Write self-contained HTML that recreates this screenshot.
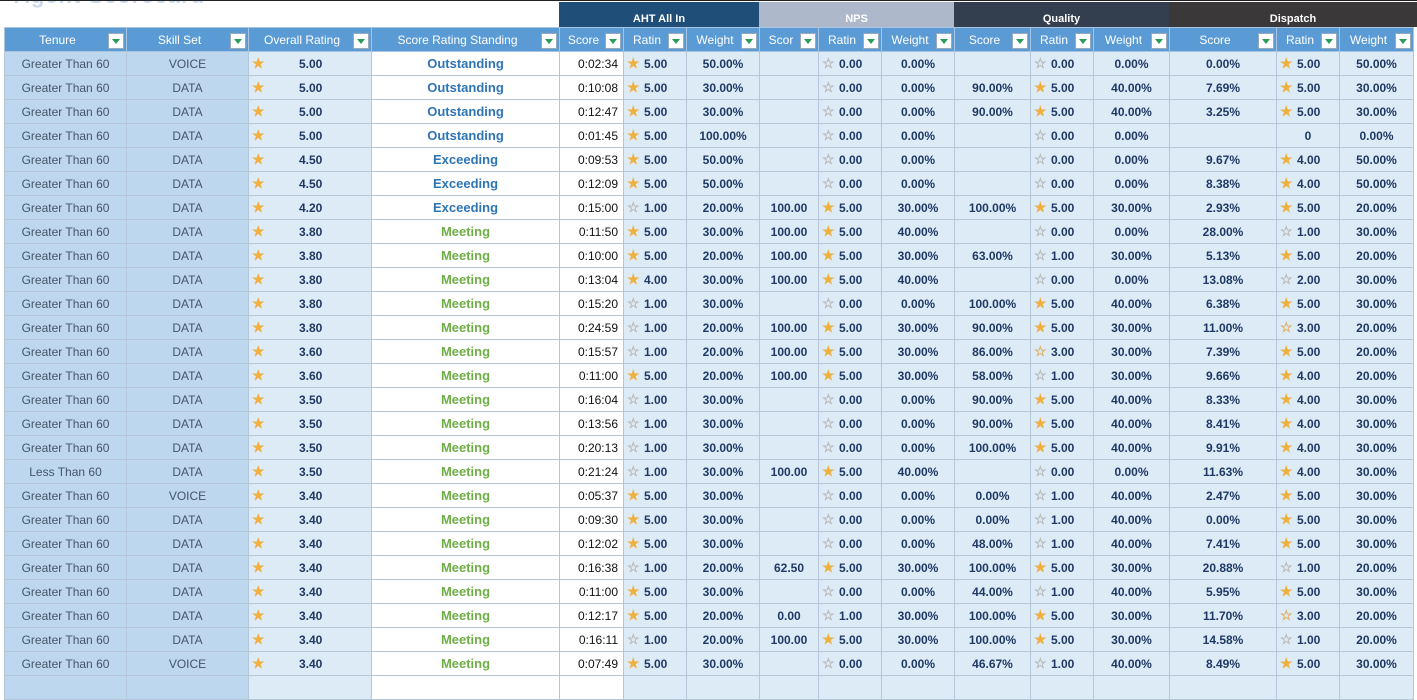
<!DOCTYPE html>
<html><head><meta charset="utf-8"><style>
body{margin:0;width:1417px;height:682px;overflow:hidden;background:#fff;font-family:"Liberation Sans",Arial,sans-serif;position:relative}
.title{position:absolute;left:14px;top:-17px;font-size:22px;color:#c9d9ec;font-weight:bold;letter-spacing:1px}
.topline{position:absolute;left:0;top:0;width:1417px;height:1px;background:#222}
.grp{position:absolute;top:2px;height:25px;color:#fff;font-size:11px;font-weight:bold;text-align:center;line-height:34px;box-sizing:border-box}
table{position:absolute;left:4px;top:27px;border-collapse:collapse;table-layout:fixed}
td{height:23px;border:1px solid #b4c6d8;padding:0;font-size:12px;color:#1f3864;text-align:center;white-space:nowrap;overflow:hidden;position:relative;background:#ddebf7;font-weight:bold}
tr.h td{background:#5b9bd5;color:#fff;font-weight:normal;font-size:12px;border-color:#a9c4e0;text-align:center;padding-right:16px}
tr.h td b{position:absolute;right:2px;top:5px;width:14px;height:14px;background:#fff;border:1px solid #9ab}
tr.h td b:after{content:"";position:absolute;left:3px;top:5px;border-left:4px solid transparent;border-right:4px solid transparent;border-top:5px solid #2a9d5a}
td.t{background:#bdd7ee;color:#44546a;font-weight:normal}
td.s{background:#bdd7ee;color:#44546a;font-weight:normal}
td.w{background:#fff;font-size:13px}
td.a{background:#fff;color:#111;font-weight:normal;text-align:right;padding-right:5px}
.o{color:#2e75b6}.m{color:#70ad47}
td.r{text-align:left;padding-left:20px}
td.r i{position:absolute;left:3px;top:2px;font-style:normal;font-size:14px;line-height:18px}
.g{color:#f0b040}.e{color:#b8b8b8}.hf{color:#e0b060}
td.ov{text-align:left;padding-left:50px}
</style></head><body>
<div class="title">Agent Scorecard</div>
<div class="topline"></div>
<div class="grp" style="left:559px;width:200px;background:#1f4e79">AHT All In</div>
<div class="grp" style="left:759px;width:195px;background:#adb9ca">NPS</div>
<div class="grp" style="left:954px;width:215px;background:#333f4f">Quality</div>
<div class="grp" style="left:1169px;width:248px;background:#3a3838">Dispatch</div>
<table>
<colgroup><col style="width:122px"><col style="width:122px"><col style="width:123px"><col style="width:188px"><col style="width:64px"><col style="width:63px"><col style="width:73px"><col style="width:59px"><col style="width:63px"><col style="width:73px"><col style="width:76px"><col style="width:63px"><col style="width:76px"><col style="width:107px"><col style="width:63px"><col style="width:74px"></colgroup>
<tr class="h"><td>Tenure<b></b></td><td>Skill Set<b></b></td><td>Overall Rating<b></b></td><td>Score Rating Standing<b></b></td><td>Score<b></b></td><td>Ratin<b></b></td><td>Weight<b></b></td><td>Scor<b></b></td><td>Ratin<b></b></td><td>Weight<b></b></td><td>Score<b></b></td><td>Ratin<b></b></td><td>Weight<b></b></td><td>Score<b></b></td><td>Ratin<b></b></td><td>Weight<b></b></td></tr>
<tr><td class="t">Greater Than 60</td><td class="s">VOICE</td><td class="r ov"><i class="g">★</i>5.00</td><td class="w o">Outstanding</td><td class="a">0:02:34</td><td class="r"><i class="g">★</i>5.00</td><td>50.00%</td><td></td><td class="r"><i class="e">☆</i>0.00</td><td>0.00%</td><td></td><td class="r"><i class="e">☆</i>0.00</td><td>0.00%</td><td>0.00%</td><td class="r"><i class="g">★</i>5.00</td><td>50.00%</td></tr>
<tr><td class="t">Greater Than 60</td><td class="s">DATA</td><td class="r ov"><i class="g">★</i>5.00</td><td class="w o">Outstanding</td><td class="a">0:10:08</td><td class="r"><i class="g">★</i>5.00</td><td>30.00%</td><td></td><td class="r"><i class="e">☆</i>0.00</td><td>0.00%</td><td>90.00%</td><td class="r"><i class="g">★</i>5.00</td><td>40.00%</td><td>7.69%</td><td class="r"><i class="g">★</i>5.00</td><td>30.00%</td></tr>
<tr><td class="t">Greater Than 60</td><td class="s">DATA</td><td class="r ov"><i class="g">★</i>5.00</td><td class="w o">Outstanding</td><td class="a">0:12:47</td><td class="r"><i class="g">★</i>5.00</td><td>30.00%</td><td></td><td class="r"><i class="e">☆</i>0.00</td><td>0.00%</td><td>90.00%</td><td class="r"><i class="g">★</i>5.00</td><td>40.00%</td><td>3.25%</td><td class="r"><i class="g">★</i>5.00</td><td>30.00%</td></tr>
<tr><td class="t">Greater Than 60</td><td class="s">DATA</td><td class="r ov"><i class="g">★</i>5.00</td><td class="w o">Outstanding</td><td class="a">0:01:45</td><td class="r"><i class="g">★</i>5.00</td><td>100.00%</td><td></td><td class="r"><i class="e">☆</i>0.00</td><td>0.00%</td><td></td><td class="r"><i class="e">☆</i>0.00</td><td>0.00%</td><td></td><td>0</td><td>0.00%</td></tr>
<tr><td class="t">Greater Than 60</td><td class="s">DATA</td><td class="r ov"><i class="g">★</i>4.50</td><td class="w o">Exceeding</td><td class="a">0:09:53</td><td class="r"><i class="g">★</i>5.00</td><td>50.00%</td><td></td><td class="r"><i class="e">☆</i>0.00</td><td>0.00%</td><td></td><td class="r"><i class="e">☆</i>0.00</td><td>0.00%</td><td>9.67%</td><td class="r"><i class="g">★</i>4.00</td><td>50.00%</td></tr>
<tr><td class="t">Greater Than 60</td><td class="s">DATA</td><td class="r ov"><i class="g">★</i>4.50</td><td class="w o">Exceeding</td><td class="a">0:12:09</td><td class="r"><i class="g">★</i>5.00</td><td>50.00%</td><td></td><td class="r"><i class="e">☆</i>0.00</td><td>0.00%</td><td></td><td class="r"><i class="e">☆</i>0.00</td><td>0.00%</td><td>8.38%</td><td class="r"><i class="g">★</i>4.00</td><td>50.00%</td></tr>
<tr><td class="t">Greater Than 60</td><td class="s">DATA</td><td class="r ov"><i class="g">★</i>4.20</td><td class="w o">Exceeding</td><td class="a">0:15:00</td><td class="r"><i class="e">☆</i>1.00</td><td>20.00%</td><td>100.00</td><td class="r"><i class="g">★</i>5.00</td><td>30.00%</td><td>100.00%</td><td class="r"><i class="g">★</i>5.00</td><td>30.00%</td><td>2.93%</td><td class="r"><i class="g">★</i>5.00</td><td>20.00%</td></tr>
<tr><td class="t">Greater Than 60</td><td class="s">DATA</td><td class="r ov"><i class="g">★</i>3.80</td><td class="w m">Meeting</td><td class="a">0:11:50</td><td class="r"><i class="g">★</i>5.00</td><td>30.00%</td><td>100.00</td><td class="r"><i class="g">★</i>5.00</td><td>40.00%</td><td></td><td class="r"><i class="e">☆</i>0.00</td><td>0.00%</td><td>28.00%</td><td class="r"><i class="e">☆</i>1.00</td><td>30.00%</td></tr>
<tr><td class="t">Greater Than 60</td><td class="s">DATA</td><td class="r ov"><i class="g">★</i>3.80</td><td class="w m">Meeting</td><td class="a">0:10:00</td><td class="r"><i class="g">★</i>5.00</td><td>20.00%</td><td>100.00</td><td class="r"><i class="g">★</i>5.00</td><td>30.00%</td><td>63.00%</td><td class="r"><i class="e">☆</i>1.00</td><td>30.00%</td><td>5.13%</td><td class="r"><i class="g">★</i>5.00</td><td>20.00%</td></tr>
<tr><td class="t">Greater Than 60</td><td class="s">DATA</td><td class="r ov"><i class="g">★</i>3.80</td><td class="w m">Meeting</td><td class="a">0:13:04</td><td class="r"><i class="g">★</i>4.00</td><td>30.00%</td><td>100.00</td><td class="r"><i class="g">★</i>5.00</td><td>40.00%</td><td></td><td class="r"><i class="e">☆</i>0.00</td><td>0.00%</td><td>13.08%</td><td class="r"><i class="e">☆</i>2.00</td><td>30.00%</td></tr>
<tr><td class="t">Greater Than 60</td><td class="s">DATA</td><td class="r ov"><i class="g">★</i>3.80</td><td class="w m">Meeting</td><td class="a">0:15:20</td><td class="r"><i class="e">☆</i>1.00</td><td>30.00%</td><td></td><td class="r"><i class="e">☆</i>0.00</td><td>0.00%</td><td>100.00%</td><td class="r"><i class="g">★</i>5.00</td><td>40.00%</td><td>6.38%</td><td class="r"><i class="g">★</i>5.00</td><td>30.00%</td></tr>
<tr><td class="t">Greater Than 60</td><td class="s">DATA</td><td class="r ov"><i class="g">★</i>3.80</td><td class="w m">Meeting</td><td class="a">0:24:59</td><td class="r"><i class="e">☆</i>1.00</td><td>20.00%</td><td>100.00</td><td class="r"><i class="g">★</i>5.00</td><td>30.00%</td><td>90.00%</td><td class="r"><i class="g">★</i>5.00</td><td>30.00%</td><td>11.00%</td><td class="r"><i class="hf">☆</i>3.00</td><td>20.00%</td></tr>
<tr><td class="t">Greater Than 60</td><td class="s">DATA</td><td class="r ov"><i class="g">★</i>3.60</td><td class="w m">Meeting</td><td class="a">0:15:57</td><td class="r"><i class="e">☆</i>1.00</td><td>20.00%</td><td>100.00</td><td class="r"><i class="g">★</i>5.00</td><td>30.00%</td><td>86.00%</td><td class="r"><i class="hf">☆</i>3.00</td><td>30.00%</td><td>7.39%</td><td class="r"><i class="g">★</i>5.00</td><td>20.00%</td></tr>
<tr><td class="t">Greater Than 60</td><td class="s">DATA</td><td class="r ov"><i class="g">★</i>3.60</td><td class="w m">Meeting</td><td class="a">0:11:00</td><td class="r"><i class="g">★</i>5.00</td><td>20.00%</td><td>100.00</td><td class="r"><i class="g">★</i>5.00</td><td>30.00%</td><td>58.00%</td><td class="r"><i class="e">☆</i>1.00</td><td>30.00%</td><td>9.66%</td><td class="r"><i class="g">★</i>4.00</td><td>20.00%</td></tr>
<tr><td class="t">Greater Than 60</td><td class="s">DATA</td><td class="r ov"><i class="g">★</i>3.50</td><td class="w m">Meeting</td><td class="a">0:16:04</td><td class="r"><i class="e">☆</i>1.00</td><td>30.00%</td><td></td><td class="r"><i class="e">☆</i>0.00</td><td>0.00%</td><td>90.00%</td><td class="r"><i class="g">★</i>5.00</td><td>40.00%</td><td>8.33%</td><td class="r"><i class="g">★</i>4.00</td><td>30.00%</td></tr>
<tr><td class="t">Greater Than 60</td><td class="s">DATA</td><td class="r ov"><i class="g">★</i>3.50</td><td class="w m">Meeting</td><td class="a">0:13:56</td><td class="r"><i class="e">☆</i>1.00</td><td>30.00%</td><td></td><td class="r"><i class="e">☆</i>0.00</td><td>0.00%</td><td>90.00%</td><td class="r"><i class="g">★</i>5.00</td><td>40.00%</td><td>8.41%</td><td class="r"><i class="g">★</i>4.00</td><td>30.00%</td></tr>
<tr><td class="t">Greater Than 60</td><td class="s">DATA</td><td class="r ov"><i class="g">★</i>3.50</td><td class="w m">Meeting</td><td class="a">0:20:13</td><td class="r"><i class="e">☆</i>1.00</td><td>30.00%</td><td></td><td class="r"><i class="e">☆</i>0.00</td><td>0.00%</td><td>100.00%</td><td class="r"><i class="g">★</i>5.00</td><td>40.00%</td><td>9.91%</td><td class="r"><i class="g">★</i>4.00</td><td>30.00%</td></tr>
<tr><td class="t">Less Than 60</td><td class="s">DATA</td><td class="r ov"><i class="g">★</i>3.50</td><td class="w m">Meeting</td><td class="a">0:21:24</td><td class="r"><i class="e">☆</i>1.00</td><td>30.00%</td><td>100.00</td><td class="r"><i class="g">★</i>5.00</td><td>40.00%</td><td></td><td class="r"><i class="e">☆</i>0.00</td><td>0.00%</td><td>11.63%</td><td class="r"><i class="g">★</i>4.00</td><td>30.00%</td></tr>
<tr><td class="t">Greater Than 60</td><td class="s">VOICE</td><td class="r ov"><i class="g">★</i>3.40</td><td class="w m">Meeting</td><td class="a">0:05:37</td><td class="r"><i class="g">★</i>5.00</td><td>30.00%</td><td></td><td class="r"><i class="e">☆</i>0.00</td><td>0.00%</td><td>0.00%</td><td class="r"><i class="e">☆</i>1.00</td><td>40.00%</td><td>2.47%</td><td class="r"><i class="g">★</i>5.00</td><td>30.00%</td></tr>
<tr><td class="t">Greater Than 60</td><td class="s">DATA</td><td class="r ov"><i class="g">★</i>3.40</td><td class="w m">Meeting</td><td class="a">0:09:30</td><td class="r"><i class="g">★</i>5.00</td><td>30.00%</td><td></td><td class="r"><i class="e">☆</i>0.00</td><td>0.00%</td><td>0.00%</td><td class="r"><i class="e">☆</i>1.00</td><td>40.00%</td><td>0.00%</td><td class="r"><i class="g">★</i>5.00</td><td>30.00%</td></tr>
<tr><td class="t">Greater Than 60</td><td class="s">DATA</td><td class="r ov"><i class="g">★</i>3.40</td><td class="w m">Meeting</td><td class="a">0:12:02</td><td class="r"><i class="g">★</i>5.00</td><td>30.00%</td><td></td><td class="r"><i class="e">☆</i>0.00</td><td>0.00%</td><td>48.00%</td><td class="r"><i class="e">☆</i>1.00</td><td>40.00%</td><td>7.41%</td><td class="r"><i class="g">★</i>5.00</td><td>30.00%</td></tr>
<tr><td class="t">Greater Than 60</td><td class="s">DATA</td><td class="r ov"><i class="g">★</i>3.40</td><td class="w m">Meeting</td><td class="a">0:16:38</td><td class="r"><i class="e">☆</i>1.00</td><td>20.00%</td><td>62.50</td><td class="r"><i class="g">★</i>5.00</td><td>30.00%</td><td>100.00%</td><td class="r"><i class="g">★</i>5.00</td><td>30.00%</td><td>20.88%</td><td class="r"><i class="e">☆</i>1.00</td><td>20.00%</td></tr>
<tr><td class="t">Greater Than 60</td><td class="s">DATA</td><td class="r ov"><i class="g">★</i>3.40</td><td class="w m">Meeting</td><td class="a">0:11:00</td><td class="r"><i class="g">★</i>5.00</td><td>30.00%</td><td></td><td class="r"><i class="e">☆</i>0.00</td><td>0.00%</td><td>44.00%</td><td class="r"><i class="e">☆</i>1.00</td><td>40.00%</td><td>5.95%</td><td class="r"><i class="g">★</i>5.00</td><td>30.00%</td></tr>
<tr><td class="t">Greater Than 60</td><td class="s">DATA</td><td class="r ov"><i class="g">★</i>3.40</td><td class="w m">Meeting</td><td class="a">0:12:17</td><td class="r"><i class="g">★</i>5.00</td><td>20.00%</td><td>0.00</td><td class="r"><i class="e">☆</i>1.00</td><td>30.00%</td><td>100.00%</td><td class="r"><i class="g">★</i>5.00</td><td>30.00%</td><td>11.70%</td><td class="r"><i class="hf">☆</i>3.00</td><td>20.00%</td></tr>
<tr><td class="t">Greater Than 60</td><td class="s">DATA</td><td class="r ov"><i class="g">★</i>3.40</td><td class="w m">Meeting</td><td class="a">0:16:11</td><td class="r"><i class="e">☆</i>1.00</td><td>20.00%</td><td>100.00</td><td class="r"><i class="g">★</i>5.00</td><td>30.00%</td><td>100.00%</td><td class="r"><i class="g">★</i>5.00</td><td>30.00%</td><td>14.58%</td><td class="r"><i class="e">☆</i>1.00</td><td>20.00%</td></tr>
<tr><td class="t">Greater Than 60</td><td class="s">VOICE</td><td class="r ov"><i class="g">★</i>3.40</td><td class="w m">Meeting</td><td class="a">0:07:49</td><td class="r"><i class="g">★</i>5.00</td><td>30.00%</td><td></td><td class="r"><i class="e">☆</i>0.00</td><td>0.00%</td><td>46.67%</td><td class="r"><i class="e">☆</i>1.00</td><td>40.00%</td><td>8.49%</td><td class="r"><i class="g">★</i>5.00</td><td>30.00%</td></tr>
<tr><td class="t"></td><td class="s"></td><td></td><td class="w"></td><td class="a"></td><td></td><td></td><td></td><td></td><td></td><td></td><td></td><td></td><td></td><td></td><td></td></tr>
</table>
</body></html>
